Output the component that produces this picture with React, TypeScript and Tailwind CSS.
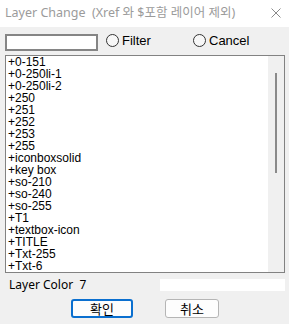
import React from "react";

const items = [
  "+0-151",
  "+0-250li-1",
  "+0-250li-2",
  "+250",
  "+251",
  "+252",
  "+253",
  "+255",
  "+iconboxsolid",
  "+key box",
  "+so-210",
  "+so-240",
  "+so-255",
  "+T1",
  "+textbox-icon",
  "+TITLE",
  "+Txt-255",
  "+Txt-6",
];

const Radio = ({ label, width }: { label: string; width: string }) => (
  <div className={`flex items-center h-[13px] ${width}`}>
    <span className="w-[13px] h-[13px] rounded-full border border-[#333333] bg-[#f7f7f7]" />
    <span className="ml-[3px] text-[13px] leading-[13px] text-black font-['Liberation_Sans',sans-serif]">
      {label}
    </span>
  </div>
);

export default function App() {
  return (
    <div className="w-[289px] h-[324px] bg-[#f0f0f0] flex flex-col font-['Noto_Sans','Noto_Sans_CJK_KR',sans-serif]">
      <div className="h-[27px] bg-white flex items-center justify-between pl-[5px] pr-[8px]">
        <span className="text-[12.5px] text-[#9b9b9b] whitespace-pre">
          {"Layer Change  (Xref 와 $포함 레이어 제외)"}
        </span>
        <svg width="10" height="10" viewBox="0 0 10 10" className="mb-[1px]">
          <path d="M0.5 0.5 L9.5 9.5 M9.5 0.5 L0.5 9.5" stroke="#8a8a8a" strokeWidth="1" fill="none" />
        </svg>
      </div>

      <div className="mt-[7px] flex items-start pl-[5px] h-[17px]">
        <div className="w-[93px] h-[17px] bg-white border-2 border-[#858585]" />
        <div className="ml-[8px] flex">
          <Radio label="Filter" width="w-[87px]" />
          <Radio label="Cancel" width="w-[60px]" />
        </div>
      </div>

      <div className="mt-[4px] ml-[5px] w-[280px] h-[218px] border border-[#828282] bg-white flex">
        <div className="flex-1 pl-[2px] font-['Liberation_Sans',sans-serif] text-[12px] leading-[12px] text-black">
          {items.map((t) => (
            <div key={t} className="h-[12px] whitespace-pre">
              {t}
            </div>
          ))}
        </div>
        <div className="w-[16px] bg-[#f0f0f0] pt-[17px] pl-[7px]">
          <div className="w-[2px] h-[100px] bg-[#8a8a8a]" />
        </div>
      </div>

      <div className="mt-[4px] h-[16px] flex items-center pl-[9px] pr-[4px]">
        <span className="text-[12px] leading-[16px] text-black whitespace-pre w-[151px]">
          {"Layer Color  7"}
        </span>
        <div className="w-[125px] h-[12px] bg-white" />
      </div>

      <div className="mt-[6px] flex pl-[71px]">
        <button className="w-[62px] h-[19px] rounded-[3px] border-2 border-[#0a6fcf] bg-[#fdfdfd] text-[13px] leading-[13px] text-black font-['Noto_Sans_CJK_KR',sans-serif]">
          확인
        </button>
        <button className="ml-[32px] w-[54px] h-[19px] rounded-[3px] border border-[#b5b5b5] bg-[#fdfdfd] text-[13px] leading-[13px] text-black font-['Noto_Sans_CJK_KR',sans-serif]">
          취소
        </button>
      </div>
    </div>
  );
}
